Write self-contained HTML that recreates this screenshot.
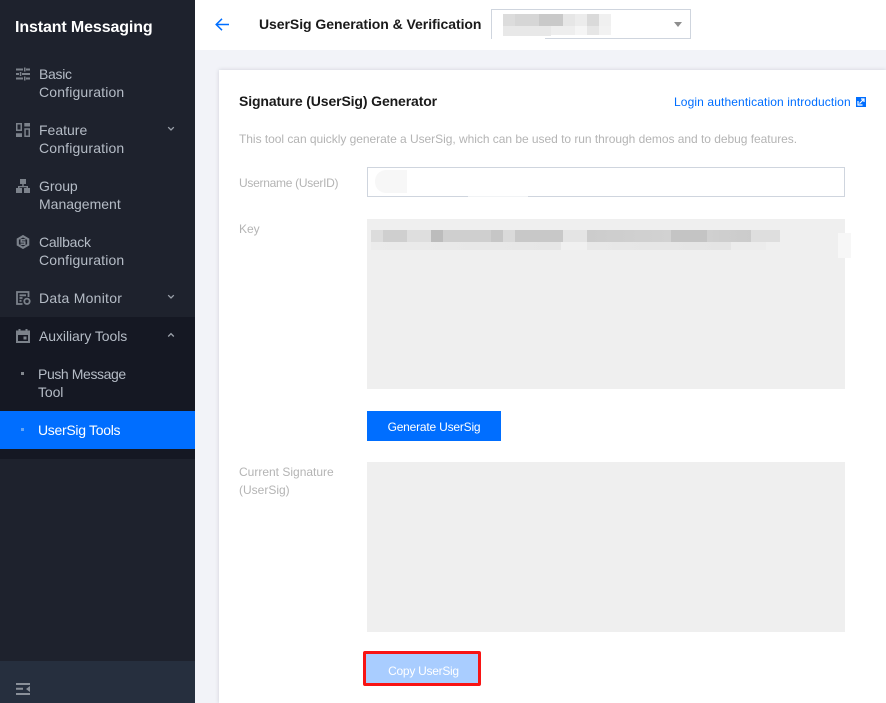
<!DOCTYPE html>
<html><head><meta charset="utf-8"><style>
html,body{margin:0;padding:0}
body{width:886px;height:703px;overflow:hidden;position:relative;background:#f2f3f8;font-family:"Liberation Sans",sans-serif}
div,a{position:absolute}
.t{white-space:nowrap}
.side{left:0;top:0;width:195px;height:703px;background:#1e222d}
.m{left:39px;font-size:14px;line-height:18px;color:#b5bcc6;white-space:nowrap}
.c{letter-spacing:.16px}
svg{position:absolute}
.lab{font-size:12px;line-height:18px;color:#b4b4b4;white-space:nowrap}
.gray{background:#efefef;left:367px;width:478px}
</style></head><body>
<div class="side"></div>
<div class="t" style="left:15px;top:18px;font-size:16px;line-height:20px;font-weight:bold;color:#fff;letter-spacing:-.12px">Instant Messaging</div>

<svg style="left:16px;top:67px" width="14" height="14" viewBox="0 0 14 14" fill="#7c828b"><path d="M0 1.500h7v2H0zM10 1.500h4v2h-4zM8 .5h1.500v4H8zM0 6h3v2H0zM6 6h8v2H6zM3.800 5h1.500v4H3.800zM0 10.500h7v2H0zM10 10.500h4v2h-4zM8 9.500h1.500v4H8z"/></svg>
<div class="m" style="top:65px"><span style="letter-spacing:-.3px">Basic</span><br><span class="c">Configuration</span></div>

<svg style="left:16px;top:123px" width="14" height="14" viewBox="0 0 14 14" fill="#7c828b"><path d="M0 0h6v8H0zM1.500 1.500v5h3v-5zM8.300 0H14v3.500H8.300zM0 10.300h6V14H0zM8.300 5.300H14V14H8.300zM9.800 6.800v5.700h2.700V6.800z" fill-rule="evenodd"/></svg>
<div class="m" style="top:121px">Feature<br><span class="c">Configuration</span></div>
<svg style="left:167px;top:126px" width="8" height="6" viewBox="0 0 8 6" fill="none" stroke="#9ba1aa" stroke-width="1.300"><path d="M1.200 1.200L4 4l2.800-2.800"/></svg>

<svg style="left:16px;top:179px" width="14" height="14" viewBox="0 0 14 14" fill="#7c828b"><path d="M4 0h6v5H7.700v2H12v2h2v5H8V9h2.500V8.300h-7V9H6v5H0V9h2V7h4.300V5H4z"/></svg>
<div class="m" style="top:177px"><span style="letter-spacing:-.05px">Group</span><br>Management</div>

<svg style="left:16px;top:235px" width="14" height="14" viewBox="0 0 14 14" fill="none" stroke="#7c828b" stroke-width="2.200"><path d="M7 1.200l5.200 3v5.600L7 12.800 1.800 9.800V4.200z"/><path d="M9.500 4.800H5.200V7h3.600v2.200H4.500" stroke-width="1.500"/></svg>
<div class="m" style="top:233px"><span style="letter-spacing:-.25px">Callback</span><br><span class="c">Configuration</span></div>

<svg style="left:16px;top:291px" width="15" height="14" viewBox="0 0 15 14" fill="none" stroke="#7c828b" stroke-width="1.800"><path d="M6.500 13H1V1h11.500v5"/><path d="M3.500 4.300h6.500M3.500 7h3M3.500 9.800h2"/><circle cx="11" cy="10.300" r="2.700"/></svg>
<div class="m" style="top:289px;letter-spacing:.25px">Data Monitor</div>
<svg style="left:167px;top:294px" width="8" height="6" viewBox="0 0 8 6" fill="none" stroke="#9ba1aa" stroke-width="1.300"><path d="M1.200 1.200L4 4l2.800-2.800"/></svg>

<div style="left:0;top:317px;width:195px;height:142px;background:#151823"></div>
<svg style="left:16px;top:329px" width="14" height="14" viewBox="0 0 14 14" fill="#7c828b"><path d="M2.500 0h2v1.500h5V0h2v1.500H14V14H0V1.500h2.500zM2 6v6h10V6zM7.500 7.500h3v3h-3z" fill-rule="evenodd"/></svg>
<div class="m" style="top:327px;letter-spacing:-.07px">Auxiliary Tools</div>
<svg style="left:167px;top:332px" width="8" height="6" viewBox="0 0 8 6" fill="none" stroke="#9ba1aa" stroke-width="1.300"><path d="M1.200 4.500L4 1.700l2.800 2.800"/></svg>
<div style="left:21px;top:372px;width:3px;height:3px;background:#83888f"></div>
<div class="m" style="left:38px;top:365px"><span style="letter-spacing:-.4px">Push Message</span><br><span style="letter-spacing:-.1px">Tool</span></div>
<div style="left:0;top:411px;width:195px;height:38px;background:#006eff"></div>
<div style="left:21px;top:428px;width:3px;height:3px;background:#66a6f5"></div>
<div class="m" style="left:38px;top:421px;color:#fff;letter-spacing:-.3px">UserSig Tools</div>

<div style="left:0;top:661px;width:195px;height:42px;background:#262f3e"></div>
<svg style="left:16px;top:683px" width="14" height="12" viewBox="0 0 14 12" fill="#8a9099"><path d="M0 0h14v2H0zM0 4.700h7v2H0zM0 10h14v2H0zM14 3v6l-4-3z"/></svg>

<div style="left:195px;top:0;width:691px;height:50px;background:#fff"></div>
<svg style="left:215px;top:18px" width="14" height="13" viewBox="0 0 14 13" fill="none" stroke="#006eff" stroke-width="1.500"><path d="M14 6.500H1.500M7 .8L1.200 6.500 7 12.200"/></svg>
<div class="t" style="left:259px;top:15px;font-size:14px;line-height:18px;font-weight:bold;color:#1a1a1a;letter-spacing:-.05px">UserSig Generation &amp; Verification</div>
<div style="left:491px;top:9px;width:198px;height:28px;border:1px solid #cfd5de;background:#fff"></div>
<div style="left:492px;top:10px;width:53px;height:29px;background:#fff"></div>
<div style="left:503px;top:14px;width:12px;height:12px;background:#dcdcdc"></div>
<div style="left:515px;top:14px;width:24px;height:12px;background:#d6d6d6"></div>
<div style="left:539px;top:14px;width:24px;height:12px;background:#c9c9c9"></div>
<div style="left:563px;top:14px;width:12px;height:12px;background:#e6e6e6"></div>
<div style="left:575px;top:14px;width:12px;height:12px;background:#ececec"></div>
<div style="left:587px;top:14px;width:12px;height:12px;background:#dadada"></div>
<div style="left:599px;top:14px;width:12px;height:12px;background:#f0f0f0"></div>
<div style="left:503px;top:26px;width:48px;height:10px;background:#e8e8e8"></div>
<div style="left:551px;top:26px;width:24px;height:9px;background:#eeeeee"></div>
<div style="left:575px;top:26px;width:12px;height:9px;background:#f5f5f5"></div>
<div style="left:587px;top:26px;width:12px;height:9px;background:#e6e6e6"></div>
<div style="left:599px;top:26px;width:12px;height:9px;background:#f2f2f2"></div>
<svg style="left:674px;top:22px" width="8" height="5" viewBox="0 0 8 5" fill="#8e8e8e"><path d="M0 0h8L4 5z"/></svg>

<div style="left:219px;top:70px;width:667px;height:633px;background:#fff;box-shadow:0 0 4px rgba(54,58,80,.18)"></div>
<div class="t" style="left:239px;top:92px;font-size:14px;line-height:18px;font-weight:bold;color:#1a1a1a;letter-spacing:-.12px">Signature (UserSig) Generator</div>
<div class="t" style="left:674px;top:93px;font-size:12px;line-height:18px;color:#006eff;letter-spacing:.12px">Login authentication introduction</div>
<svg style="left:856px;top:97px" width="10" height="10" viewBox="0 0 10 10"><path d="M0 0h10v10H0z" fill="#006eff"/><path d="M2 4v4h4.500" fill="none" stroke="#fff" stroke-width="1.200"/><path d="M3.500 6.500L7.500 2.500M5 2h3v3" fill="none" stroke="#fff" stroke-width="1.200"/></svg>
<div class="lab" style="left:239px;top:130px;letter-spacing:-.035px">This tool can quickly generate a UserSig, which can be used to run through demos and to debug features.</div>

<div class="lab" style="left:239px;top:174px;letter-spacing:-.28px">Username (UserID)</div>
<div style="left:367px;top:167px;width:476px;height:28px;border:1px solid #cfd5de;background:#fff"></div>
<div style="left:375px;top:170px;width:32px;height:23px;background:#f7f7f7;border-radius:11px 0 0 11px"></div>
<div style="left:468px;top:196px;width:60px;height:1px;background:#fff;opacity:.7"></div>

<div class="lab" style="left:239px;top:220px">Key</div>
<div class="gray" style="top:219px;height:170px"></div>
<div style="left:838px;top:233px;width:13px;height:25px;background:#f7f7f7"></div>
<div style="left:371px;top:230px;width:409px;height:12px;background:linear-gradient(90deg,#dcdcdc 0,#dcdcdc 12px,#cfcfcf 12px,#cfcfcf 36px,#dedede 36px,#dedede 60px,#bcbcbc 60px,#bcbcbc 72px,#cfcfcf 72px,#cfcfcf 120px,#c6c6c6 120px,#c6c6c6 132px,#dadada 132px,#dadada 144px,#c8c8c8 144px,#c8c8c8 192px,#e4e4e4 192px,#e4e4e4 216px,#cccccc 216px,#d2d2d2 300px,#c4c4c4 300px,#c4c4c4 336px,#d0d0d0 336px,#cbcbcb 380px,#dedede 380px)"></div>
<div style="left:371px;top:242px;width:395px;height:8px;background:linear-gradient(90deg,#ebebeb 0,#e6e6e6 190px,#f0f0f0 190px,#f0f0f0 216px,#e8e8e8 216px,#e4e4e4 360px,#ececec 360px)"></div>

<div style="left:367px;top:411px;width:134px;height:30px;background:#006eff"></div>
<div class="t" style="left:367px;top:418px;width:134px;text-align:center;font-size:12px;line-height:18px;color:#fff;letter-spacing:-.2px">Generate UserSig</div>

<div class="lab" style="left:239px;top:463px">Current Signature<br>(UserSig)</div>
<div class="gray" style="top:462px;height:170px"></div>

<div style="left:363px;top:651px;width:118px;height:35px;box-sizing:border-box;border:3px solid #f81414;border-radius:2px;background:#a9cdff"></div>
<div class="t" style="left:366px;top:662px;width:115px;text-align:center;font-size:12px;line-height:18px;color:#fff;letter-spacing:-.28px">Copy UserSig</div>
</body></html>
